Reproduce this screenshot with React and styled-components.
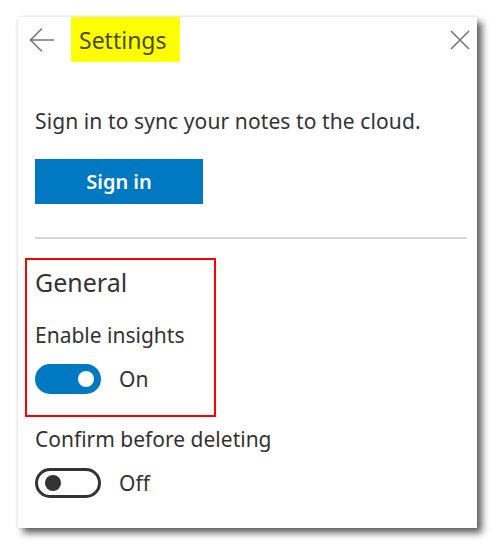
import React, { useState } from "react";
import styled, { createGlobalStyle } from "styled-components";

const GlobalStyle = createGlobalStyle`
  html, body {
    margin: 0;
    padding: 0;
    background: #ffffff;
  }
  body {
    font-family: "Noto Sans", "Open Sans", sans-serif;
    color: #333333;
  }
`;

const Page = styled.div`
  width: 496px;
  height: 548px;
  padding: 17px 0 0 18px;
  box-sizing: border-box;
`;

const Panel = styled.div`
  width: 459px;
  height: 511px;
  background: #ffffff;
  box-shadow: 5px 5px 7px rgba(0, 0, 0, 0.62), 0 0 3px rgba(0, 0, 0, 0.12);
  box-sizing: border-box;
  padding: 0 7px 0 17px;
  display: flex;
  flex-direction: column;
`;

const Header = styled.div`
  height: 45px;
  display: flex;
  align-items: center;
  margin-left: -6px;
`;

const IconButton = styled.button`
  border: none;
  background: none;
  padding: 0;
  display: flex;
  align-items: center;
  justify-content: center;
  color: #777777;
  cursor: pointer;
`;

const Title = styled.h1`
  margin: 0 0 0 16px;
  height: 45px;
  width: 109px;
  box-sizing: border-box;
  padding-left: 8px;
  background: #ffff00;
  font-size: 23px;
  font-weight: 400;
  line-height: 47px;
  color: #4a4a2a;
`;

const Spacer = styled.div`
  flex: 1;
`;

const Intro = styled.p`
  margin: 45px 0 0;
  font-size: 21px;
  letter-spacing: 0.1px;
  line-height: 28px;
`;

const PrimaryButton = styled.button`
  margin-top: 24px;
  width: 168px;
  height: 45px;
  border: none;
  background: #0078c2;
  color: #ffffff;
  font-family: inherit;
  font-size: 20px;
  font-weight: 600;
  cursor: pointer;
`;

const Divider = styled.hr`
  margin: 33px 3px 0 0;
  border: none;
  height: 2px;
  background: #d6d6d6;
`;

const Highlight = styled.section`
  margin: 19px 0 0 -10px;
  width: 191px;
  height: 159px;
  box-sizing: border-box;
  border: 2px solid #ff0000;
  padding: 5px 0 0 8px;
`;

const SectionTitle = styled.h2`
  margin: 0;
  font-size: 25px;
  font-weight: 400;
  line-height: 34px;
`;

const Label = styled.div`
  margin-top: ${(p) => p.$gap}px;
  font-size: 21px;
  line-height: 28px;
`;

const ToggleRow = styled.label`
  margin-top: 15px;
  display: flex;
  align-items: center;
  gap: 18px;
  font-size: 21px;
  line-height: 30px;
  cursor: pointer;
`;

const Track = styled.span`
  position: relative;
  width: 66px;
  height: 30px;
  border-radius: 15px;
  box-sizing: border-box;
  background: ${(p) => (p.$on ? "#0078c2" : "#ffffff")};
  border: 3px solid ${(p) => (p.$on ? "#0078c2" : "#333333")};
  flex-shrink: 0;
`;

const Knob = styled.span`
  position: absolute;
  top: 4px;
  left: ${(p) => (p.$on ? "40px" : "7px")};
  width: 16px;
  height: 16px;
  border-radius: 50%;
  background: ${(p) => (p.$on ? "#ffffff" : "#333333")};
`;

const Toggle = ({ on, onChange }) => (
  <ToggleRow onClick={onChange}>
    <Track $on={on}>
      <Knob $on={on} />
    </Track>
    {on ? "On" : "Off"}
  </ToggleRow>
);

const App = () => {
  const [insights, setInsights] = useState(true);
  const [confirm, setConfirm] = useState(false);

  return (
    <Page>
      <GlobalStyle />
      <Panel>
        <Header>
          <IconButton aria-label="Back">
            <svg width="26" height="26" viewBox="0 0 26 26" fill="none" stroke="currentColor" strokeWidth="1.6">
              <path d="M25 13H1.5M13 1.5L1.5 13L13 24.5" />
            </svg>
          </IconButton>
          <Title>Settings</Title>
          <Spacer />
          <IconButton aria-label="Close">
            <svg width="20" height="20" viewBox="0 0 20 20" fill="none" stroke="currentColor" strokeWidth="1.6">
              <path d="M1 1L19 19M19 1L1 19" />
            </svg>
          </IconButton>
        </Header>

        <Intro>Sign in to sync your notes to the cloud.</Intro>
        <div>
          <PrimaryButton>Sign in</PrimaryButton>
        </div>
        <Divider />

        <Highlight>
          <SectionTitle>General</SectionTitle>
          <Label $gap={22}>Enable insights</Label>
          <Toggle on={insights} onChange={() => setInsights(!insights)} />
        </Highlight>

        <Label $gap={8}>Confirm before deleting</Label>
        <Toggle on={confirm} onChange={() => setConfirm(!confirm)} />
      </Panel>
    </Page>
  );
};

export default App;
